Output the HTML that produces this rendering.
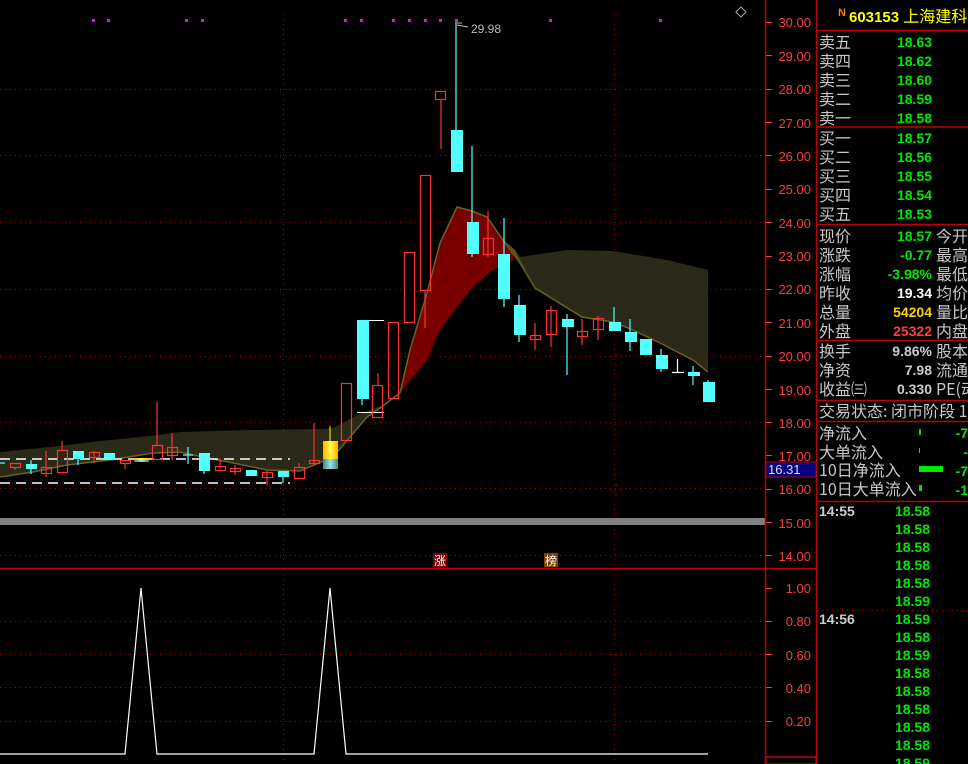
<!DOCTYPE html>
<html><head><meta charset="utf-8"><style>
html,body{margin:0;padding:0;background:#000;width:968px;height:764px;overflow:hidden}
svg{display:block}
.ax{font:13px "Liberation Sans",sans-serif;fill:#ff3c3c}
.lb{font:16px "WenQuanYi Zen Hei","Noto Sans CJK SC",sans-serif;fill:#c8c8c8}
.v{font:bold 14px "Liberation Sans",sans-serif;text-anchor:end}
.g{fill:#00e800}
</style></head><body>
<svg width="968" height="764" viewBox="0 0 968 764" xmlns="http://www.w3.org/2000/svg">
<rect width="968" height="764" fill="#000"/>
<g stroke="#c00000" stroke-width="1" stroke-dasharray="1,4">
<line x1="0" y1="89.5" x2="765" y2="89.5"/><line x1="0" y1="155.5" x2="765" y2="155.5"/>
<line x1="0" y1="222.5" x2="765" y2="222.5"/><line x1="0" y1="289.5" x2="765" y2="289.5"/>
<line x1="0" y1="356.5" x2="765" y2="356.5"/><line x1="0" y1="422.5" x2="765" y2="422.5"/>
<line x1="0" y1="488.5" x2="765" y2="488.5"/><line x1="0" y1="555.5" x2="765" y2="555.5"/>
<line x1="0" y1="621.5" x2="765" y2="621.5"/><line x1="0" y1="654.5" x2="765" y2="654.5"/>
<line x1="0" y1="687.5" x2="765" y2="687.5"/><line x1="0" y1="721.5" x2="765" y2="721.5"/>
<line x1="283.5" y1="14" x2="283.5" y2="764"/><line x1="614.5" y1="14" x2="614.5" y2="764"/>
<line x1="817" y1="610.5" x2="968" y2="610.5"/>
</g>
<polygon fill="#2b2918" points="0,452 50,447 100,441 150,436 180,432 250,430 320,429 333,428 345,422 355,416 370,410 380,406 380,408 367,417 350,437 333,457 300,471 267,470 233,463 207,458 180,452 153,453 110,460 67,465 33,472 0,477"/>
<polygon fill="#7a0000" points="380,406 400,393 410,350 427,293 440,243 457,207 472,211 487,217 503,240 515,250 513,260 493,270 473,287 457,307 440,330 427,360 400,393"/>
<polygon fill="#2b2918" points="515,250 520,257 567,250 613,251 667,260 708,270 708,372 693,360 660,343 633,330 613,322 582,317 535,288 520,263"/>
<polyline fill="none" stroke="#6b6420" stroke-width="1.5" points="0,477 33,472 67,465 110,460 153,453 180,452 207,458 233,463 267,470 300,471 333,457 350,437 367,417 380,408 400,393 410,350 427,293 440,243 457,207 472,211 487,217 503,240 520,263 535,288 582,317 613,322 633,330 660,343 693,360 708,372"/>
<polygon fill="#5a5418" points="503,240 515,250 535,288 520,263"/>
<g stroke="#fff" stroke-width="1.5" stroke-dasharray="10,6">
<line x1="0" y1="459" x2="290" y2="459"/><line x1="0" y1="483" x2="290" y2="483"/></g>
<line x1="357" y1="320.5" x2="384" y2="320.5" stroke="#fff"/><line x1="357" y1="412.5" x2="384" y2="412.5" stroke="#fff"/>
<defs><linearGradient id="yl" x1="0" x2="1"><stop offset="0" stop-color="#ffb000"/><stop offset=".5" stop-color="#ffff40"/><stop offset="1" stop-color="#ffb000"/></linearGradient>
<linearGradient id="tl" x1="0" x2="1"><stop offset="0" stop-color="#3a8a8a"/><stop offset=".5" stop-color="#a0e0e0"/><stop offset="1" stop-color="#3a8a8a"/></linearGradient></defs>
<g stroke="#ff3232" stroke-width="1.2" fill="none">
<path d="M15 467V470M46 451V477M62 441V450M94 451V463M125 463V469M157 402V445M172 433V460M220 458V466M235 465V475M267 471V485M299 463V467M314 423V465M378 373V385M425 290V328M441 99V149M488 211V257M535 323V350M551 306V347M582 319V345M598 316V340"/>
<rect x="10.5" y="463.5" width="10" height="4"/><rect x="41.5" y="467.5" width="10" height="6"/><rect x="57.5" y="450.5" width="10" height="22"/>
<rect x="89.5" y="452.5" width="10" height="5"/><rect x="120.5" y="460.5" width="10" height="3"/><rect x="152.5" y="445.5" width="10" height="14"/>
<rect x="167.5" y="447.5" width="10" height="8"/><rect x="215.5" y="466.5" width="10" height="4"/><rect x="230.5" y="468.5" width="10" height="3"/>
<rect x="262.5" y="472.5" width="10" height="5"/><rect x="294.5" y="467.5" width="10" height="11"/><rect x="309.5" y="460.5" width="10" height="3"/>
<rect x="341.5" y="383.5" width="10" height="57"/><rect x="372.5" y="385.5" width="10" height="32"/><rect x="388.5" y="322.5" width="10" height="76"/>
<rect x="404.5" y="252.5" width="10" height="70"/><rect x="420.5" y="175.5" width="10" height="115"/><rect x="435.5" y="91.5" width="10" height="8"/>
<rect x="483.5" y="238.5" width="10" height="16"/><rect x="530.5" y="335.5" width="10" height="4"/><rect x="546.5" y="310.5" width="10" height="24"/>
<rect x="577.5" y="331.5" width="10" height="5"/><rect x="593.5" y="318.5" width="10" height="11"/>
</g>
<g stroke="#54ffff" stroke-width="1.2"><path d="M31 460V474M78 459V465M188 447V464M204 471V474M283 477V483M362 399V405M456 22V172M472 146V257M504 218V307M519 295V342M567 314V375M614 307V331M630 319V351M661 349V372M693 366V385M708 380V402M0 463H5M183 455H193"/></g>
<g fill="#54ffff">
<rect x="26" y="464" width="11" height="5"/><rect x="73" y="451" width="11" height="8"/><rect x="104" y="453" width="11" height="7"/>
<rect x="199" y="453" width="11" height="18"/><rect x="246" y="470" width="11" height="6"/><rect x="278" y="471" width="11" height="6"/>
<rect x="357" y="320" width="12" height="79"/><rect x="451" y="130" width="12" height="42"/><rect x="467" y="222" width="12" height="32"/>
<rect x="498" y="254" width="12" height="45"/><rect x="514" y="305" width="12" height="30"/><rect x="562" y="319" width="12" height="8"/>
<rect x="609" y="322" width="12" height="9"/><rect x="625" y="332" width="12" height="10"/><rect x="640" y="339" width="12" height="16"/>
<rect x="656" y="355" width="12" height="14"/><rect x="688" y="372" width="12" height="4"/><rect x="703" y="382" width="12" height="20"/>
</g>
<path d="M672 372.5H684M677.5 359V372" stroke="#fff" stroke-width="1.2"/>
<rect x="134" y="458" width="15" height="2" fill="url(#yl)"/><rect x="134" y="460" width="15" height="2" fill="url(#tl)"/>
<line x1="330" y1="426" x2="330" y2="441" stroke="#ff0"/>
<rect x="323" y="441" width="15" height="18" fill="url(#yl)"/><rect x="323" y="459" width="15" height="10" fill="url(#tl)"/>
<g fill="#ff00ff"><rect x="92" y="19" width="3" height="3"/><rect x="107" y="19" width="3" height="3"/><rect x="185" y="19" width="3" height="3"/><rect x="201" y="19" width="3" height="3"/><rect x="344" y="19" width="3" height="3"/><rect x="360" y="19" width="3" height="3"/><rect x="392" y="19" width="3" height="3"/><rect x="408" y="19" width="3" height="3"/><rect x="424" y="19" width="3" height="3"/><rect x="439" y="19" width="3" height="3"/><rect x="455" y="19" width="3" height="3"/><rect x="549" y="19" width="3" height="3"/><rect x="659" y="19" width="3" height="3"/></g>
<path d="M457 23H462M457 25L468 27" stroke="#bbb"/>
<text x="471" y="33" style="font:12px 'Liberation Sans',sans-serif;fill:#bbb">29.98</text>
<path d="M736 12L741 7L746 12L741 17Z" fill="none" stroke="#aaa"/>
<rect x="0" y="518" width="766" height="7" fill="#808080"/>
<line x1="0" y1="568.5" x2="816" y2="568.5" stroke="#c00000" stroke-width="1.5"/>
<rect x="433" y="553" width="14" height="14" fill="#800000"/><text x="440" y="565" text-anchor="middle" style="font:12px 'WenQuanYi Zen Hei',sans-serif;fill:#fff">涨</text>
<rect x="544" y="553" width="14" height="14" fill="#804000"/><text x="551" y="565" text-anchor="middle" style="font:12px 'WenQuanYi Zen Hei',sans-serif;fill:#fff">榜</text>
<polyline fill="none" stroke="#fff" stroke-width="1.2" points="0,754 125,754 141,588 157,754 314,754 330,588 346,754 708,754"/>
<line x1="765.5" y1="0" x2="765.5" y2="764" stroke="#c00000" stroke-width="1.5"/>
<line x1="816.5" y1="0" x2="816.5" y2="764" stroke="#c00000" stroke-width="1.5"/>
<g stroke="#ff3c3c"><path d="M766 22.5H772M766 55.5H772M766 89.5H772M766 122.5H772M766 155.5H772M766 189.5H772M766 222.5H772M766 256.5H772M766 289.5H772M766 322.5H772M766 356.5H772M766 389.5H772M766 422.5H772M766 455.5H772M766 489.5H772M766 522.5H772M766 555.5H772M766 588.5H772M766 621.5H772M766 654.5H772M766 687.5H772M766 721.5H772"/></g>
<g class="ax" text-anchor="end">
<text x="811" y="27">30.00</text><text x="811" y="61">29.00</text><text x="811" y="94">28.00</text><text x="811" y="128">27.00</text><text x="811" y="161">26.00</text><text x="811" y="194">25.00</text><text x="811" y="228">24.00</text><text x="811" y="261">23.00</text><text x="811" y="294">22.00</text><text x="811" y="328">21.00</text><text x="811" y="361">20.00</text><text x="811" y="395">19.00</text><text x="811" y="428">18.00</text><text x="811" y="461">17.00</text><text x="811" y="494">16.00</text><text x="811" y="528">15.00</text><text x="811" y="561">14.00</text>
<text x="811" y="593">1.00</text><text x="811" y="626">0.80</text><text x="811" y="660">0.60</text><text x="811" y="693">0.40</text><text x="811" y="726">0.20</text></g>
<rect x="766" y="462" width="50" height="15" fill="#000080" stroke="#c00000"/>
<text x="768" y="474" style="font:13px 'Liberation Sans',sans-serif;fill:#ddd">16.31</text>
<rect x="766" y="757" width="50" height="7" fill="none" stroke="#c00000" stroke-width="1.5"/>
<g stroke="#c00000" stroke-width="1.5"><path d="M817 30.5H968M817 127H968M817 224.5H968M817 340.5H968M817 400.5H968M817 421.5H968M817 501.5H968"/></g>
<text x="838" y="16" style="font:bold 11px 'Liberation Sans',sans-serif;fill:#ff8000">N</text>
<text x="849" y="22" style="font:bold 15px 'Liberation Sans','WenQuanYi Zen Hei',sans-serif;fill:#ffff00">603153 <tspan style="font-weight:normal;font-size:16px">上海建科</tspan></text>
<g class="lb">
<text x="819" y="48">卖五</text><text x="819" y="67">卖四</text><text x="819" y="86">卖三</text><text x="819" y="105">卖二</text><text x="819" y="124">卖一</text>
<text x="819" y="144">买一</text><text x="819" y="163">买二</text><text x="819" y="182">买三</text><text x="819" y="201">买四</text><text x="819" y="220">买五</text>
<text x="819" y="242">现价</text><text x="819" y="261">涨跌</text><text x="819" y="280">涨幅</text><text x="819" y="299">昨收</text><text x="819" y="318">总量</text><text x="819" y="337">外盘</text>
<text x="936" y="242">今开</text><text x="936" y="261">最高</text><text x="936" y="280">最低</text><text x="936" y="299">均价</text><text x="936" y="318">量比</text><text x="936" y="337">内盘</text>
<text x="819" y="357">换手</text><text x="819" y="376">净资</text><text x="819" y="395">收益㈢</text>
<text x="936" y="357">股本</text><text x="936" y="376">流通</text><text x="936" y="395">PE(动</text>
<text x="819" y="417">交易状态: 闭市阶段 15</text>
<text x="819" y="439">净流入</text><text x="819" y="458">大单流入</text><text x="819" y="476">10日净流入</text><text x="819" y="495">10日大单流入</text>
</g>
<g class="v g">
<text x="932" y="47">18.63</text><text x="932" y="66">18.62</text><text x="932" y="85">18.60</text><text x="932" y="104">18.59</text><text x="932" y="123">18.58</text>
<text x="932" y="143">18.57</text><text x="932" y="162">18.56</text><text x="932" y="181">18.55</text><text x="932" y="200">18.54</text><text x="932" y="219">18.53</text>
<text x="932" y="241">18.57</text><text x="932" y="260">-0.77</text><text x="932" y="279">-3.98%</text>
</g>
<g class="v"><text x="932" y="298" fill="#fff">19.34</text><text x="932" y="317" fill="#ffd000">54204</text><text x="932" y="336" fill="#ff3c3c">25322</text>
<text x="932" y="356" fill="#ccc">9.86%</text><text x="932" y="375" fill="#ccc">7.98</text><text x="932" y="394" fill="#ccc">0.330</text></g>
<g fill="#00e800"><rect x="919" y="429" width="2" height="6"/><rect x="919" y="448" width="1" height="5"/><rect x="919" y="466" width="24" height="6"/><rect x="919" y="485" width="3" height="6"/></g>
<g class="v g"><text x="968" y="438">-7</text><text x="968" y="457">-</text><text x="968" y="476">-7</text><text x="968" y="495">-1</text></g>
<g style="font:bold 14px 'Liberation Sans',sans-serif;fill:#ccc"><text x="819" y="516">14:55</text><text x="819" y="624">14:56</text></g>
<g class="v g">
<text x="930" y="516">18.58</text><text x="930" y="534">18.58</text><text x="930" y="552">18.58</text><text x="930" y="570">18.58</text><text x="930" y="588">18.58</text><text x="930" y="606">18.59</text>
<text x="930" y="624">18.59</text><text x="930" y="642">18.58</text><text x="930" y="660">18.59</text><text x="930" y="678">18.58</text><text x="930" y="696">18.58</text><text x="930" y="714">18.58</text><text x="930" y="732">18.58</text><text x="930" y="750">18.58</text><text x="930" y="768">18.59</text>
</g>
</svg>
</body></html>
